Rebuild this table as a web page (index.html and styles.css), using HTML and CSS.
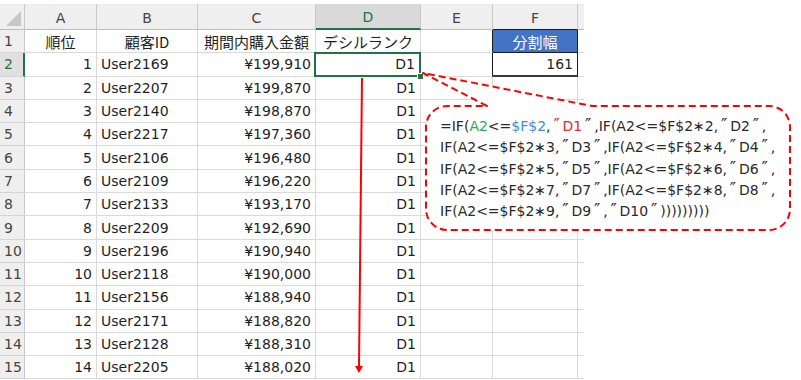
FILE: index.html
```html
<!DOCTYPE html>
<html lang="ja">
<head>
<meta charset="utf-8">
<title>デシルランク</title>
<link rel="stylesheet" href="styles.css">
</head>
<body>
<div class="sheet">
  <div class="grid">
    <div class="ch corner"><span class="tri"></span></div>
    <div class="ch">A</div>
    <div class="ch">B</div>
    <div class="ch">C</div>
    <div class="ch ch-sel">D</div>
    <div class="ch ch-e">E</div>
    <div class="ch ch-f">F</div>
    <div class="ch ch-g"></div>

    <div class="rh">1</div>
    <div class="c ctr jp">順位</div>
    <div class="c ctr jp">顧客ID</div>
    <div class="c ctr jp wide">期間内購入金額</div>
    <div class="c ctr jp">デシルランク</div>
    <div class="c e-fb"></div>
    <div class="c f-head jp">分割幅</div>
    <div class="c g"></div>

    <div class="rh rh-sel">2</div>
    <div class="c r">1</div><div class="c l">User2169</div><div class="c r">¥199,910</div>
    <div class="c r sel">D1<span class="sel-box"></span><span class="handle"></span></div>
    <div class="c e-fb"></div><div class="c r f-val">161</div><div class="c g"></div>

    <div class="rh">3</div>
    <div class="c r">2</div><div class="c l">User2207</div><div class="c r">¥199,870</div><div class="c r">D1</div><div class="c"></div><div class="c"></div><div class="c g"></div>
    <div class="rh">4</div>
    <div class="c r">3</div><div class="c l">User2140</div><div class="c r">¥198,870</div><div class="c r">D1</div><div class="c"></div><div class="c"></div><div class="c g"></div>
    <div class="rh">5</div>
    <div class="c r">4</div><div class="c l">User2217</div><div class="c r">¥197,360</div><div class="c r">D1</div><div class="c"></div><div class="c"></div><div class="c g"></div>
    <div class="rh">6</div>
    <div class="c r">5</div><div class="c l">User2106</div><div class="c r">¥196,480</div><div class="c r">D1</div><div class="c"></div><div class="c"></div><div class="c g"></div>
    <div class="rh">7</div>
    <div class="c r">6</div><div class="c l">User2109</div><div class="c r">¥196,220</div><div class="c r">D1</div><div class="c"></div><div class="c"></div><div class="c g"></div>
    <div class="rh">8</div>
    <div class="c r">7</div><div class="c l">User2133</div><div class="c r">¥193,170</div><div class="c r">D1</div><div class="c"></div><div class="c"></div><div class="c g"></div>
    <div class="rh">9</div>
    <div class="c r">8</div><div class="c l">User2209</div><div class="c r">¥192,690</div><div class="c r">D1</div><div class="c"></div><div class="c"></div><div class="c g"></div>
    <div class="rh">10</div>
    <div class="c r">9</div><div class="c l">User2196</div><div class="c r">¥190,940</div><div class="c r">D1</div><div class="c"></div><div class="c"></div><div class="c g"></div>
    <div class="rh">11</div>
    <div class="c r">10</div><div class="c l">User2118</div><div class="c r">¥190,000</div><div class="c r">D1</div><div class="c"></div><div class="c"></div><div class="c g"></div>
    <div class="rh">12</div>
    <div class="c r">11</div><div class="c l">User2156</div><div class="c r">¥188,940</div><div class="c r">D1</div><div class="c"></div><div class="c"></div><div class="c g"></div>
    <div class="rh">13</div>
    <div class="c r">12</div><div class="c l">User2171</div><div class="c r">¥188,820</div><div class="c r">D1</div><div class="c"></div><div class="c"></div><div class="c g"></div>
    <div class="rh">14</div>
    <div class="c r">13</div><div class="c l">User2128</div><div class="c r">¥188,310</div><div class="c r">D1</div><div class="c"></div><div class="c"></div><div class="c g"></div>
    <div class="rh">15</div>
    <div class="c r">14</div><div class="c l">User2205</div><div class="c r">¥188,020</div><div class="c r">D1</div><div class="c"></div><div class="c"></div><div class="c g"></div>
  </div>

  <svg class="overlay" width="801" height="380" viewBox="0 0 801 380">
    <path class="bubble" d="M487 106 L423 73 L592 106 L769 106 A21 21 0 0 1 790 127 L790 209 A21 21 0 0 1 769 230 L447 230 A21 21 0 0 1 426 209 L426 127 A21 21 0 0 1 447 106 Z"/>
    <line class="arrow" x1="362" y1="78" x2="359" y2="367"/>
    <polygon class="arrow-head" points="355,366 363,366 359,373"/>
  </svg>

  <div class="formula">=IF(<span class="g-ref">A2</span>&lt;=<span class="b-ref">$F$2</span>,<span class="r-ref"><span class="q">″</span>D1</span><span class="q">″</span>,IF(A2&lt;=$F$2∗2,<span class="q">″</span>D2<span class="q">″</span>,<br>IF(A2&lt;=$F$2∗3,<span class="q">″</span>D3<span class="q">″</span>,IF(A2&lt;=$F$2∗4,<span class="q">″</span>D4<span class="q">″</span>,<br>IF(A2&lt;=$F$2∗5,<span class="q">″</span>D5<span class="q">″</span>,IF(A2&lt;=$F$2∗6,<span class="q">″</span>D6<span class="q">″</span>,<br>IF(A2&lt;=$F$2∗7,<span class="q">″</span>D7<span class="q">″</span>,IF(A2&lt;=$F$2∗8,<span class="q">″</span>D8<span class="q">″</span>,<br>IF(A2&lt;=$F$2∗9,<span class="q">″</span>D9<span class="q">″</span>,<span class="q">″</span>D10<span class="q">″</span>)))))))))</div>
</div>
</body>
</html>
```

FILE: styles.css
```css
html, body {
  margin: 0;
  padding: 0;
  background: #ffffff;
}

body {
  font-family: "DejaVu Sans", "Noto Sans CJK JP", sans-serif;
  font-size: 14px;
  color: #222222;
}

.sheet {
  position: relative;
  width: 801px;
  height: 380px;
  overflow: hidden;
  padding-top: 4px;
  box-sizing: border-box;
}

.grid {
  display: grid;
  grid-template-columns: 25px 72px 101px 118px 105px 72px 85px 6px;
  grid-template-rows: 26px repeat(15, 23.3px);
  width: 584px;
}

.grid > div {
  box-sizing: border-box;
  display: flex;
  align-items: center;
  white-space: nowrap;
  min-width: 0;
}

/* column headers */
.ch {
  background: #efefef;
  border-right: 1px solid #c9c9c9;
  border-bottom: 1px solid #bdbdbd;
  justify-content: center;
  color: #444444;
  font-size: 14px;
  padding-top: 2px;
}

.corner {
  position: relative;
}

.tri {
  position: absolute;
  right: 3px;
  bottom: 3px;
  width: 0;
  height: 0;
  border-left: 15px solid transparent;
  border-bottom: 15px solid #c6c6c6;
}

.ch-sel {
  background: #d9d9d9;
  color: #217346;
  border-bottom: 2px solid #217346;
}

.ch-f {
  border-bottom-color: #1b1b1b;
}

.ch-g {
  border-right: none;
}

/* row headers */
.rh {
  background: #efefef;
  border-right: 1px solid #c9c9c9;
  border-bottom: 1px solid #d4d4d4;
  color: #444444;
  font-size: 14px;
  padding-left: 4px;
}

.rh-sel {
  background: #e0e0e0;
  color: #217346;
  border-right: 2px solid #217346;
}

/* cells */
.c {
  border-right: 1px solid #d9d9d9;
  border-bottom: 1px solid #d9d9d9;
  padding: 0 4px;
  color: #1f1f1f;
}

.c.r {
  justify-content: flex-end;
}

.c.l {
  justify-content: flex-start;
}

.c.ctr {
  justify-content: center;
  padding: 0;
}

.jp {
  font-family: "Noto Sans CJK JP", sans-serif;
  font-size: 15px;
}

.wide {
  overflow: visible;
}

.c.g {
  border-right: none;
  padding: 0;
}

.e-fb {
  border-right-color: #1b1b1b;
}

.f-head {
  background: #4472c4;
  color: #ffffff;
  justify-content: center;
  border-right-color: #1b1b1b;
  border-bottom-color: #1b1b1b;
}

.f-val {
  border-right-color: #1b1b1b;
  border-bottom: 2px solid #3a3a3a;
}

.sel {
  position: relative;
  padding-right: 5px;
}

.sel-box {
  position: absolute;
  left: -2px;
  top: -1px;
  right: -1px;
  bottom: -1px;
  border: 2px solid #217346;
}

.handle {
  position: absolute;
  right: -4px;
  bottom: -4px;
  width: 5px;
  height: 5px;
  background: #217346;
  border: 1px solid #ffffff;
}

/* overlay drawing */
.overlay {
  position: absolute;
  left: 0;
  top: 0;
}

.bubble {
  fill: #ffffff;
  stroke: #ff0000;
  stroke-width: 2;
  stroke-dasharray: 7 4;
  stroke-linejoin: round;
}

.arrow {
  stroke: #ff0000;
  stroke-width: 2;
}

.arrow-head {
  fill: #ff0000;
}

.formula {
  position: absolute;
  left: 440px;
  top: 116px;
  font-family: "DejaVu Sans", "Noto Sans CJK JP", sans-serif;
  font-size: 14px;
  line-height: 21.3px;
  letter-spacing: 0;
  color: #2a2a2a;
  white-space: nowrap;
}

.q {
  display: inline-block;
  width: 10px;
  text-align: center;
  font-size: 17px;
  line-height: 14px;
  letter-spacing: 0;
  margin: 0 1px;
}

.g-ref {
  color: #2fa84f;
}

.b-ref {
  color: #3a8ee0;
}

.r-ref {
  color: #e8262a;
}
```
